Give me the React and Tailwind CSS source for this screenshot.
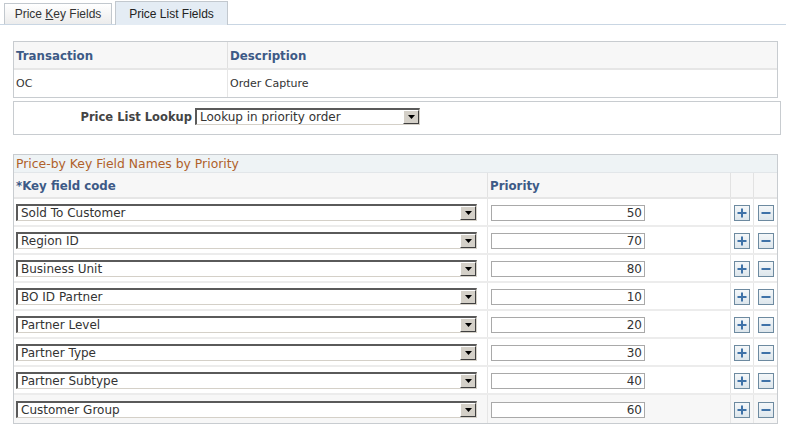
import React from "react";

const rows = [
  ["Sold To Customer", "50"],
  ["Region ID", "70"],
  ["Business Unit", "80"],
  ["BO ID Partner", "10"],
  ["Partner Level", "20"],
  ["Partner Type", "30"],
  ["Partner Subtype", "40"],
  ["Customer Group", "60"],
];

function Select({ value, width }) {
  return (
    <div
      className={`flex h-[17px] border-t-2 border-l-2 border-r border-b border-t-[#5a5a5a] border-l-[#5a5a5a] border-r-[#d4d0c8] border-b-[#d4d0c8] bg-white ${width}`}
    >
      <div className="flex-1 pl-[3px] text-[12px] leading-[15px] text-[#333] truncate">{value}</div>
      <div className="w-[16px] h-full bg-[#d4d0c8] border-t border-l border-t-white border-l-white border-r border-b border-r-[#404040] border-b-[#404040] flex items-center justify-center">
        <svg width="7" height="4" viewBox="0 0 7 4">
          <path d="M0 0H7L3.5 4Z" fill="#000" />
        </svg>
      </div>
    </div>
  );
}

function IconBtn({ minus }) {
  return (
    <div className="w-[16px] h-[16px] border border-[#6d8aa0] bg-gradient-to-b from-[#f4f7f9] to-[#dde6ec] flex items-center justify-center">
      <svg width="10" height="10" viewBox="0 0 10 10">
        <rect x="0.5" y="4" width="9" height="2" fill="#3f72a8" />
        {!minus && <rect x="4" y="0.5" width="2" height="9" fill="#3f72a8" />}
      </svg>
    </div>
  );
}

export default function App() {
  return (
    <div className="w-[786px] h-[428px] bg-white font-['DejaVu_Sans',Verdana,sans-serif] text-[11px] text-[#333] overflow-hidden">
      {/* Tabs */}
      <div className="relative h-[25px] border-b border-[#c9d6e3]">
        <div className="flex items-end gap-[3px] pl-[4px] h-full font-['Liberation_Sans',Arial,sans-serif] text-[12px]">
          <div className="h-[21px] w-[108px] border border-b-0 border-[#c2c8ce] bg-gradient-to-b from-white to-[#ececec] flex items-center justify-center text-[#333] whitespace-pre">
            Price <span className="underline">K</span>ey Fields
          </div>
          <div className="h-[24px] w-[113px] -mb-px border border-b-0 border-[#c2c8ce] bg-[#e4ecf4] flex items-center justify-center text-[#222]">
            Price List Fields
          </div>
        </div>
      </div>

      {/* Transaction grid */}
      <div className="ml-[13px] mt-[16px] w-[765px] border border-[#c8ccd0]">
        <div className="flex h-[28px] bg-[#f7f7f7] border-b-2 border-[#e6e6e6] font-bold text-[#3d5a86] text-[11.8px]">
          <div className="w-[214px] pl-[2px] pt-[3px] flex items-center border-r border-[#e0e0e0]">Transaction</div>
          <div className="flex-1 pl-[2px] pt-[3px] flex items-center">Description</div>
        </div>
        <div className="flex h-[27px] bg-white">
          <div className="w-[214px] pl-[2px] pt-[2px] flex items-center border-r border-[#e6e6e6]">OC</div>
          <div className="flex-1 pl-[2px] pt-[2px] flex items-center">Order Capture</div>
        </div>
      </div>

      {/* Lookup */}
      <div className="ml-[13px] mt-[3px] w-[768px] h-[34px] border border-[#c8ccd0] flex pt-[6px]">
        <div className="w-[181px] text-right font-bold text-[#444] text-[11.5px] pt-[1px] pr-[3px]">Price List Lookup</div>
        <Select value="Lookup in priority order" width="w-[225px]" />
      </div>

      {/* Key grid */}
      <div className="ml-[13px] mt-[19px] w-[765px] border border-[#c8ccd0]">
        <div className="h-[18px] bg-[#eef3f5] border-b border-[#e2e6e9] pl-[2px] pt-[1px] text-[12.4px] leading-[16px] text-[#b0612a]">
          Price-by Key Field Names by Priority
        </div>
        <div className="flex h-[26px] bg-[#f7f7f7] border-b-2 border-[#e6e6e6] font-bold text-[#3d5a86] text-[11.8px]">
          <div className="w-[474px] pl-[2px] pt-[3px] flex items-center border-r border-[#e2e2e2]">*Key field code</div>
          <div className="w-[243px] pl-[2px] pt-[3px] flex items-center border-r border-[#e2e2e2]">Priority</div>
          <div className="w-[23px] border-r border-[#e2e2e2]"></div>
          <div className="flex-1"></div>
        </div>
        {rows.map(([name, pr], i) => (
          <div
            key={name}
            className={`flex h-[28px] ${i < rows.length - 1 ? "border-b-2 border-[#ececec]" : ""} ${i === rows.length - 1 ? "bg-[#f7f7f7]" : "bg-white"}`}
          >
            <div className="w-[474px] pl-[2px] pt-[1px] flex items-center border-r border-[#e6e6e6]">
              <Select value={name} width="w-[461px]" />
            </div>
            <div className="w-[243px] pl-[3px] pt-[1px] flex items-center border-r border-[#e6e6e6]">
              <div className="w-[154px] h-[16px] border border-[#a9a9a9] bg-white text-right pr-[2px] text-[12px] leading-[14px] text-[#333]">
                {pr}
              </div>
            </div>
            <div className="w-[23px] pt-[1px] flex items-center justify-center border-r border-[#e6e6e6]">
              <IconBtn />
            </div>
            <div className="flex-1 pt-[1px] flex items-center justify-center">
              <IconBtn minus />
            </div>
          </div>
        ))}
      </div>
    </div>
  );
}
